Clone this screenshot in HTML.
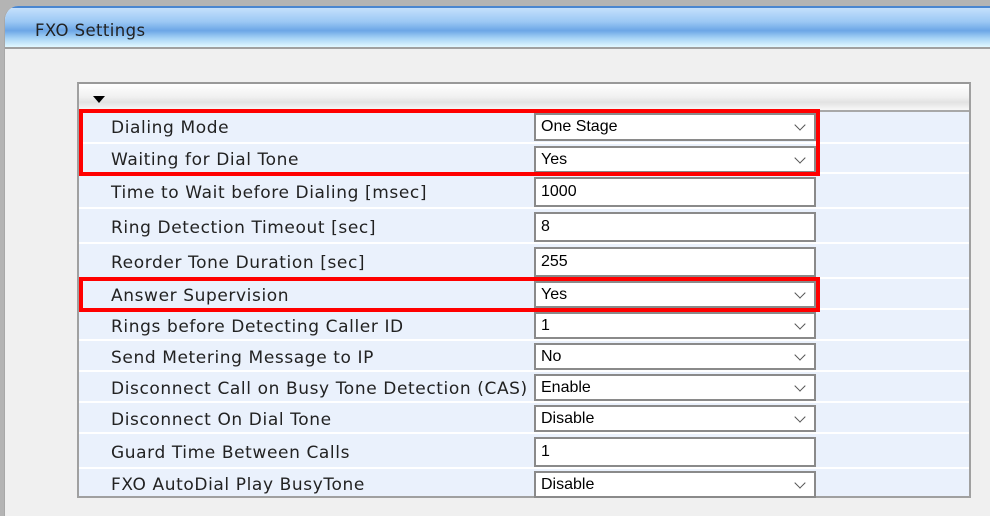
<!DOCTYPE html>
<html><head><style>
*{margin:0;padding:0;box-sizing:border-box}
body{width:990px;height:511px;background:#b4b4b4;position:relative;overflow:hidden;font-family:"DejaVu Sans",Verdana,sans-serif}
#panel{position:absolute;left:4px;top:6px;width:990px;height:510px;background:#f0f0f0;border-left:1px solid #a8a8a8;border-top-left-radius:14px;overflow:hidden}
#hdr{height:43px;border-top:2px solid #4a86d0;background:linear-gradient(#c4e0fc 0%,#9cc8f4 35%,#6ca6e6 58%,#a8d4f6 78%,#e2f8ff 100%);border-bottom:2px solid #a0a0a0;font-size:16.5px;letter-spacing:0.4px;color:#222;padding:13px 0 0 30px}
#tbl{position:absolute;left:77px;top:82px;width:894px;height:416px;border:2px solid #a0a0a0;border-top-color:#999;background:#eaf1fc}
#th{height:28px;background:linear-gradient(#fff,#f0f0f0 50%,#e2e2e2 70%,#f8f8f8);border-bottom:2px solid #a8a8a8;position:relative}
#th:after{content:"";position:absolute;left:14px;top:12px;border-left:6px solid transparent;border-right:6px solid transparent;border-top:7px solid #000}
.r{position:absolute;left:0;width:890px;border-top:2px solid #fff}
.l{position:absolute;left:32px;font-size:17px;letter-spacing:0.6px;color:#222;white-space:nowrap}
.f{position:absolute;left:455px;width:282px;background:#fff;border:2px solid #8a8a8a;font-family:"Liberation Sans",Arial,sans-serif;font-size:16px;color:#000;padding-left:5px;white-space:nowrap}
.red{position:absolute;border:4px solid #f00}
</style></head><body>
<div id="panel"><div id="hdr">FXO Settings</div></div>
<div id="tbl"><div id="th"></div></div>
<div id="rows"></div>
<div class="red" style="left:79px;top:109px;width:741px;height:67px"></div>
<div class="red" style="left:79px;top:277px;width:741px;height:35px"></div>
<script>
var d=[["Dialing Mode","One Stage",1,111,142],["Waiting for Dial Tone","Yes",1,142,172],["Time to Wait before Dialing [msec]","1000",0,172,207],["Ring Detection Timeout [sec]","8",0,207,242],["Reorder Tone Duration [sec]","255",0,242,277],["Answer Supervision","Yes",1,277,308],["Rings before Detecting Caller ID","1",1,308,339],["Send Metering Message to IP","No",1,339,370],["Disconnect Call on Busy Tone Detection (CAS)","Enable",1,370,401],["Disconnect On Dial Tone","Disable",1,401,432],["Guard Time Between Calls","1",0,432,467],["FXO AutoDial Play BusyTone","Disable",1,467,497]];
var h="";
d.forEach(function(r,i){var t=r[3],b=r[4],hh=b-t;var fh=r[2]?(i==0?28:27):30;var ft=Math.round((hh-fh)/2);
h+='<div class="r" style="left:79px;top:'+t+'px;height:'+hh+'px;'+(i==0?'border-top:none':'')+'"><div class="l" style="top:'+(hh/2-9)+'px">'+r[0]+'</div><div class="f" style="top:'+ft+'px;height:'+fh+'px;line-height:'+(fh-4)+'px">'+r[1]+(r[2]?'<i style="position:absolute;right:10px;top:'+(fh/2-8)+'px;width:8px;height:8px;border-right:1.3px solid #555;border-bottom:1.3px solid #555;transform:rotate(45deg)"></i>':'')+'</div></div>';});
document.getElementById("rows").innerHTML=h;
</script>
</body></html>
